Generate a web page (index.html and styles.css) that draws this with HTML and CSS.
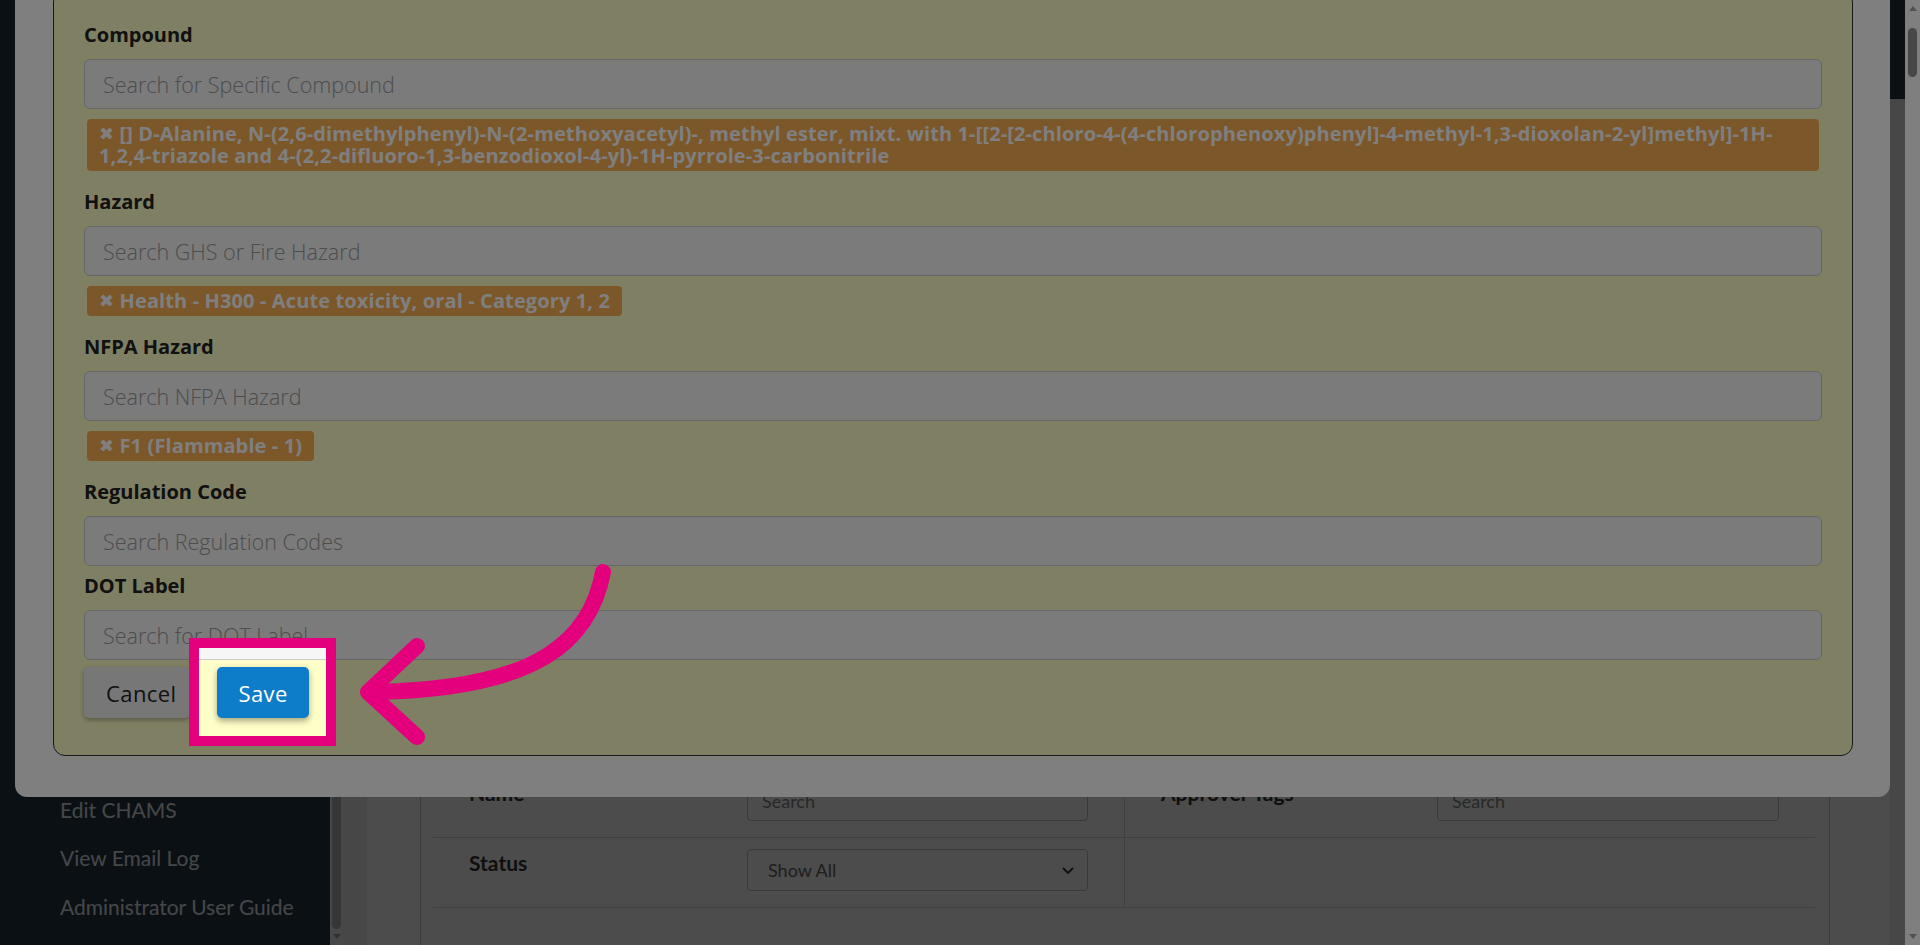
FILE: index.html
```html
<!DOCTYPE html>
<html lang="en">
<head>
  <meta charset="UTF-8">
  <meta name="viewport" content="width=device-width, initial-scale=1.0">
  <title>CHAMS Admin - Approvers</title>
  <link rel="stylesheet" href="styles.css">
</head>
<body>

  <div class="page">
    <!-- Left navigation -->
    <aside class="sidebar">
      <nav class="side-nav">
        <a class="side-link">Approvers</a>
        <a class="side-link">Edit CHAMS</a>
        <a class="side-link">View Email Log</a>
        <a class="side-link">Administrator User Guide</a>
      </nav>
      <div class="side-scroll">
        <div class="side-thumb"></div>
        <span class="tri-down"></span>
      </div>
    </aside>

    <main class="content">
      <div class="topbar"></div>
      <div class="card">
        <div class="filters">
          <div class="filter-grid">
            <div class="cell cell-label">Name</div>
            <div class="cell cell-field split"><input class="filter-input" placeholder="Search"></div>
            <div class="cell cell-label">Approver Tags</div>
            <div class="cell cell-field"><input class="filter-input" placeholder="Search"></div>

            <div class="cell cell-label">Status</div>
            <div class="cell cell-field split">
              <div class="filter-select">
                <span>Show All</span>
                <svg width="14" height="14" viewBox="0 0 14 14"><path d="M2 5l5 5 5-5" fill="none" stroke="#333" stroke-width="1.8"/></svg>
              </div>
            </div>
            <div class="cell"></div>
            <div class="cell"></div>
          </div>
        </div>
      </div>
    </main>

    <div class="page-scroll">
      <span class="tri-up"></span>
      <div class="page-thumb"></div>
      <span class="tri-down"></span>
    </div>
  </div>

  <!-- Edit approver modal -->
  <div class="backdrop"></div>
  <div class="modal">
    <div class="modal-panel">
      <div class="field">
        <label class="field-label">Compound</label>
        <input class="field-input" placeholder="Search for Specific Compound">
        <div class="chips">
          <span class="chip"><span class="chip-x">&#10006;</span> [] D-Alanine, N-(2,6-dimethylphenyl)-N-(2-methoxyacetyl)-, methyl ester, mixt. with 1-[[2-[2-chloro-4-(4-chlorophenoxy)phenyl]-4-methyl-1,3-dioxolan-2-yl]methyl]-1H-1,2,4-triazole and 4-(2,2-difluoro-1,3-benzodioxol-4-yl)-1H-pyrrole-3-carbonitrile</span>
        </div>
      </div>

      <div class="field">
        <label class="field-label">Hazard</label>
        <input class="field-input" placeholder="Search GHS or Fire Hazard">
        <div class="chips">
          <span class="chip"><span class="chip-x">&#10006;</span> Health - H300 - Acute toxicity, oral - Category 1, 2</span>
        </div>
      </div>

      <div class="field">
        <label class="field-label">NFPA Hazard</label>
        <input class="field-input" placeholder="Search NFPA Hazard">
        <div class="chips">
          <span class="chip"><span class="chip-x">&#10006;</span> F1 (Flammable - 1)</span>
        </div>
      </div>

      <div class="field">
        <label class="field-label">Regulation Code</label>
        <input class="field-input" placeholder="Search Regulation Codes">
      </div>

      <div class="field">
        <label class="field-label">DOT Label</label>
        <input class="field-input" placeholder="Search for DOT Label">
      </div>

      <div class="actions">
        <button class="btn btn-cancel">Cancel</button>
        <button class="btn btn-save">Save</button>
      </div>
    </div>
  </div>

  <!-- Guide step: highlight the save button -->
  <div class="spotlight"></div>
  <svg class="pointer" width="1920" height="945" viewBox="0 0 1920 945">
    <path d="M603 572 C590 640 540 690 370 692" />
    <path d="M417 646 L368 692 L417 737" />
  </svg>

</body>
</html>
```

FILE: styles.css
```css
/* Base */
html, body {
  margin: 0;
  height: 100%;
  overflow: hidden;
}

body {
  font-family: "Lato", "Liberation Sans", sans-serif;
  background-color: #eeeeee;
}

.page {
  display: flex;
  height: 945px;
}

/* Sidebar */
.sidebar {
  display: flex;
  width: 343px;
  background-color: #253646;
}

.side-nav {
  flex: 1;
  display: flex;
  flex-direction: column;
  justify-content: flex-end;
  padding-bottom: 14px;
}

.side-link {
  display: block;
  padding-left: 60px;
  line-height: 48.5px;
  font-size: 21px;
  color: #e8edf2;
}

.side-scroll {
  width: 13px;
  background-color: #f1f1f1;
  display: flex;
  flex-direction: column;
  align-items: center;
}

.side-thumb {
  flex: 1;
  width: 9px;
  background-color: #b5b5b5;
  border-radius: 0 0 5px 5px;
}

.tri-down,
.tri-up {
  width: 0;
  height: 0;
  border-left: 4px solid transparent;
  border-right: 4px solid transparent;
}

.tri-down {
  border-top: 5px solid #a3a3a3;
  margin: 5px 0 6px;
}

.tri-up {
  border-bottom: 5px solid #a3a3a3;
  margin: 6px 0 5px;
}

/* Main content */
.content {
  flex: 1;
  display: flex;
  flex-direction: column;
  padding: 0 15px 0 24px;
}

.topbar {
  height: 99px;
  margin: 0 -15px 0 -24px;
  background-color: #253646;
}

.card {
  flex: 1;
  background-color: #fff;
  padding: 0 60px 0 53px;
}

.filters {
  margin-top: 668px;
  border: 1px solid #c8c8c8;
  border-bottom: none;
  padding: 0 14px 0 12px;
  height: 100%;
}

.filter-grid {
  display: grid;
  grid-template-columns: 314px 378px 312px 1fr;
  grid-auto-rows: 70px;
}

.cell {
  box-sizing: border-box;
  border-bottom: 1px solid #d6d6d6;
}

.cell.split {
  border-right: 1px solid #d6d6d6;
}

.cell-label {
  padding: 13px 36px 0;
  font-size: 21px;
  font-weight: 700;
  line-height: 24px;
  color: #333;
}

.cell-field {
  padding: 11px 36px 0 0;
}

.filter-input {
  box-sizing: border-box;
  width: 100%;
  height: 40px;
  margin-top: 2px;
  border: 1px solid #c4c4c4;
  border-radius: 4px;
  padding: 0 14px;
  font-family: "Lato", sans-serif;
  font-size: 18px;
}

.filter-input::placeholder {
  color: #888;
}

.filter-select {
  box-sizing: border-box;
  height: 42px;
  display: flex;
  align-items: center;
  justify-content: space-between;
  border: 1px solid #c4c4c4;
  border-radius: 4px;
  padding: 0 12px 0 20px;
  font-size: 18px;
  color: #666;
}

/* Page scrollbar */
.page-scroll {
  width: 15px;
  background-color: #fff;
  display: flex;
  flex-direction: column;
  align-items: center;
}

.page-scroll .page-thumb {
  width: 9px;
  height: 49px;
  margin-top: 12px;
  border-radius: 5px;
  background-color: #8e8e8e;
}

.page-scroll .tri-down {
  margin-top: auto;
}

/* Modal */
.backdrop {
  position: fixed;
  left: 0;
  top: 0;
  width: 1905px;
  height: 945px;
  background-color: rgba(0, 0, 0, 0.4);
}

.modal {
  position: fixed;
  left: 15px;
  top: -50px;
  width: 1875px;
  box-sizing: border-box;
  padding: 40px 37px 41px 38px;
  background-color: #fff;
  border-radius: 12px;
}

.modal-panel {
  background-color: #fefec8;
  border: 1px solid #333;
  border-radius: 12px;
  padding: 31px 30px 37px;
  font-family: "Open Sans", "Liberation Sans", sans-serif;
}

.field {
  margin-bottom: 7px;
}

.field-label {
  display: block;
  margin-bottom: 11px;
  font-size: 20px;
  font-weight: 700;
  line-height: 26px;
  color: #222;
}

.field-input {
  display: block;
  box-sizing: border-box;
  width: 100%;
  height: 50px;
  padding: 0 18px;
  background-color: #f6f6f6;
  border: 1px solid #cccccc;
  border-radius: 6px;
  font-family: "Open Sans", sans-serif;
  font-size: 21.5px;
  font-weight: 300;
  color: #333;
}

.field-input::placeholder {
  color: #9a9a9a;
}

.chips {
  display: flex;
  flex-wrap: wrap;
  gap: 6px;
  padding: 10px 3px 11px;
}

.chip {
  padding: 4px 12px;
  background-color: #f6ae52;
  border-radius: 4px;
  font-size: 20px;
  font-weight: 700;
  line-height: 22px;
  letter-spacing: 0.12px;
  color: #fff;
}

.chip-x {
  display: inline-block;
  font-family: "DejaVu Sans", sans-serif;
  font-size: 18px;
  line-height: 22px;
  vertical-align: top;
}

.actions {
  display: flex;
  gap: 27px;
}

.btn {
  height: 51px;
  border: none;
  border-radius: 5px;
  font-family: "Open Sans", sans-serif;
  font-size: 22px;
  letter-spacing: 0.4px;
  cursor: pointer;
}

.btn-cancel {
  padding: 0 14px 0 22px;
  background-color: #efefef;
  color: #222;
  box-shadow: 0 2px 5px rgba(0, 0, 0, 0.3);
}

.btn-save {
  padding: 0 21px;
  background-color: #0d7cc9;
  color: #fff;
  box-shadow: 0 3px 6px rgba(0, 0, 0, 0.35);
}

/* Guide highlight */
.spotlight {
  position: fixed;
  left: 189px;
  top: 638px;
  width: 147px;
  height: 108px;
  box-sizing: border-box;
  border: 10px solid #e4007c;
  box-shadow: 0 0 0 3000px rgba(0, 0, 0, 0.5);
}

.pointer {
  position: fixed;
  left: 0;
  top: 0;
  pointer-events: none;
}

.pointer path {
  fill: none;
  stroke: #e4007c;
  stroke-width: 16;
  stroke-linecap: round;
  stroke-linejoin: round;
}
```
